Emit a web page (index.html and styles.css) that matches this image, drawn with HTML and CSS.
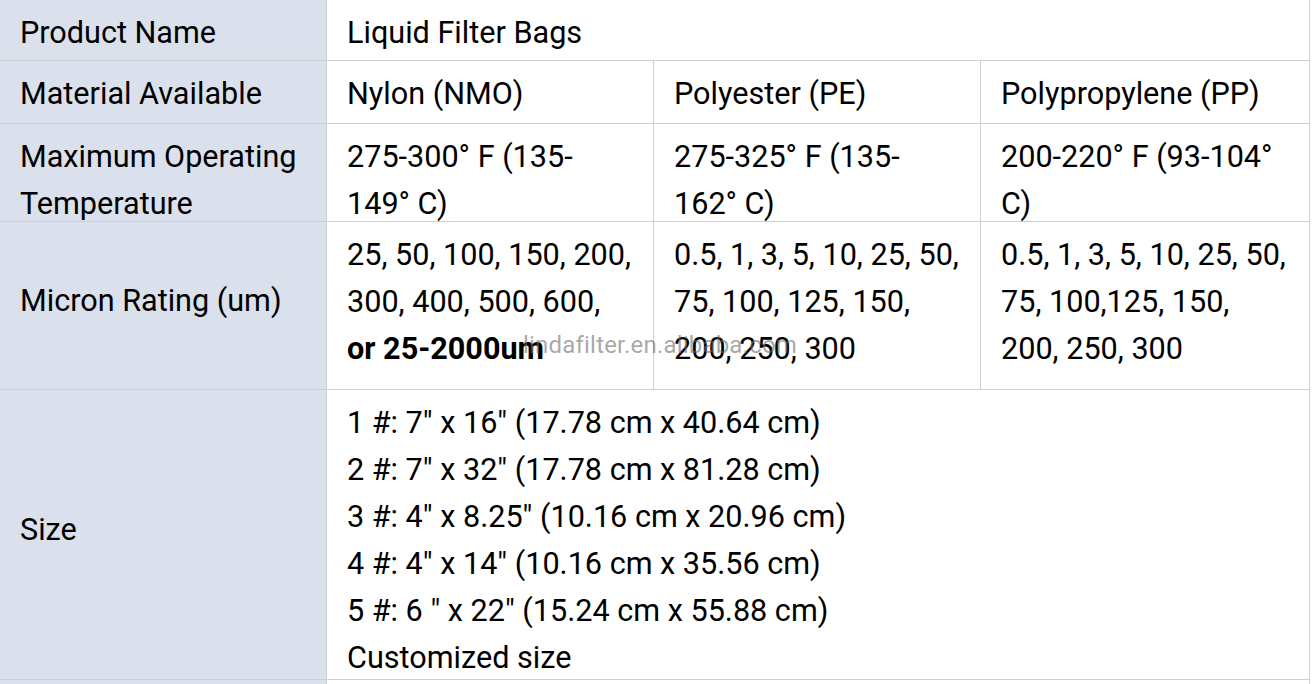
FILE: index.html
```html
<!DOCTYPE html>
<html>
<head>
<meta charset="utf-8">
<link rel="stylesheet" href="styles.css">
</head>
<body>
<div class="wrap">
  <div class="spec">
    <div class="cell label">Product Name</div>
    <div class="cell span3">Liquid Filter Bags</div>

    <div class="cell label">Material Available</div>
    <div class="cell">Nylon (NMO)</div>
    <div class="cell">Polyester (PE)</div>
    <div class="cell">Polypropylene (PP)</div>

    <div class="cell label">Maximum Operating Temperature</div>
    <div class="cell">275-300° F (135-149° C)</div>
    <div class="cell">275-325° F (135-162° C)</div>
    <div class="cell">200-220° F (93-104° C)</div>

    <div class="cell label mid">Micron Rating (um)</div>
    <div class="cell">25, 50, 100, 150, 200, 300, 400, 500, 600, <b>or 25-2000um</b></div>
    <div class="cell">0.5, 1, 3, 5, 10, 25, 50, 75, 100, 125, 150, 200, 250, 300</div>
    <div class="cell">0.5, 1, 3, 5, 10, 25, 50, 75, 100,125, 150, 200, 250, 300</div>

    <div class="cell label mid">Size</div>
    <div class="cell span3">1 #: 7″ x 16″ (17.78 cm x 40.64 cm)<br>2 #: 7″ x 32″ (17.78 cm x 81.28 cm)<br>3 #: 4″ x 8.25″ (10.16 cm x 20.96 cm)<br>4 #: 4″ x 14″ (10.16 cm x 35.56 cm)<br>5 #: 6 ″ x 22″ (15.24 cm x 55.88 cm)<br>Customized size</div>

    <div class="cell label"></div>
    <div class="cell span3"></div>
  </div>
  <div class="watermark">lindafilter.en.alibaba.com</div>
</div>
</body>
</html>
```
FILE: styles.css
```css
html, body {
  margin: 0;
  padding: 0;
  background: #fff;
  overflow: hidden;
}
.wrap {
  position: relative;
  width: 1314px;
  height: 684px;
  overflow: hidden;
}
.spec {
  display: grid;
  grid-template-columns: 326px 326px 326px 328px;
  grid-template-rows: 60px 62px 97px 167px 289px 40px;
  gap: 1px;
  padding-right: 1px;
  width: 1310px;
  box-sizing: border-box;
  background: #cfcfcf;
  font-family: Roboto, "Liberation Sans", sans-serif;
  font-size: 30.6px;
  line-height: 47px;
  color: #000;
}
.cell {
  background: #fff;
  padding: 9px 18px 0 20px;
  min-width: 0;
  min-height: 0;
}
.label {
  background: #dae1ec;
}
.label.mid {
  display: flex;
  align-items: center;
  padding-top: 0;
  padding-bottom: 10px;
}
.span3 {
  grid-column: span 3;
}
.spec b {
  font-weight: bold;
}
.watermark {
  position: absolute;
  left: 523px;
  top: 331px;
  font-family: Roboto, "Liberation Sans", sans-serif;
  font-size: 24px;
  color: rgba(110, 110, 110, 0.6);
  letter-spacing: 0.2px;
}
```
